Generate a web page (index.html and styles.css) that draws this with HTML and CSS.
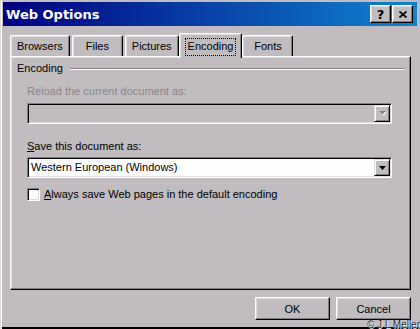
FILE: index.html
```html
<!DOCTYPE html>
<html lang="en">

<head>
    <meta charset="UTF-8">
    <meta name="viewport" content="width=device-width, initial-scale=1.0">
    <title>Web Options</title>
    <link rel="stylesheet" href="styles.css">
</head>

<body>
    <div class="window">
        <div class="titlebar">
            <span class="title">Web Options</span>
            <div class="title-buttons">
                <button class="title-btn">?</button>
                <button class="title-btn">
                    <svg width="8" height="7" viewBox="0 0 8 7">
                        <path d="M0.5 0.5 L7.5 6.5 M7.5 0.5 L0.5 6.5" stroke="#000" stroke-width="1.8" fill="none" />
                    </svg>
                </button>
            </div>
        </div>

        <div class="tabs">
            <div class="tab">Browsers</div>
            <div class="tab">Files</div>
            <div class="tab">Pictures</div>
            <div class="tab active"><span class="focus-ring">Encoding</span></div>
            <div class="tab">Fonts</div>
        </div>

        <div class="panel">
            <div class="group-head">
                <span>Encoding</span>
                <div class="groove"></div>
            </div>
            <div class="group-body">
                <div class="label disabled">Reload the current document as:</div>
                <div class="combo combo-disabled">
                    <span class="combo-text"></span>
                    <span class="combo-btn">
                        <svg width="7" height="5" viewBox="0 0 7 5">
                            <path d="M1 1 H8 L4.5 4.5 Z" fill="#fff" />
                            <path d="M0 0 H7 L3.5 3.5 Z" fill="#808080" />
                        </svg>
                    </span>
                </div>

                <div class="label save-label"><u>S</u>ave this document as:</div>
                <div class="combo">
                    <span class="combo-text">Western European (Windows)</span>
                    <span class="combo-btn">
                        <svg width="7" height="4" viewBox="0 0 7 4">
                            <path d="M0 0 H7 L3.5 4 Z" fill="#000" />
                        </svg>
                    </span>
                </div>

                <div class="check-row">
                    <span class="checkbox"></span>
                    <span><u>A</u>lways save Web pages in the default encoding</span>
                </div>
            </div>
        </div>

        <div class="footer">
            <button class="btn">OK</button>
            <button class="btn">Cancel</button>
        </div>

        <div class="credit">© J L Meller</div>
    </div>
</body>

</html>
```

FILE: styles.css
```css
body {
    margin: 0;
    background: #c0bcc0;
    font-family: "Liberation Sans", Arial, sans-serif;
    font-size: 11px;
    line-height: 13px;
    color: #000;
}

.window {
    position: relative;
    width: 420px;
    height: 329px;
    overflow: hidden;
    box-sizing: border-box;
    background: #c0bcc0;
    box-shadow: inset 1px 0 #dfdcdf, inset 2px 0 #fff, inset 0 -2px #000;
    padding-top: 2px;
}

/* title bar */

.titlebar {
    display: flex;
    align-items: center;
    justify-content: space-between;
    height: 24px;
    margin: 0 3px;
    padding: 0 3px;
    background: linear-gradient(to right, #000080, #1084d0);
}

.title {
    color: #fff;
    font-family: "DejaVu Sans", Verdana, sans-serif;
    font-weight: 700;
    font-size: 13px;
}

.title-buttons {
    display: flex;
    gap: 1px;
    margin-right: 1px;
}

.title-btn {
    display: flex;
    align-items: center;
    justify-content: center;
    width: 21px;
    height: 18px;
    padding: 0;
    background: #c0bcc0;
    border: 1px solid;
    border-color: #fff #000 #000 #fff;
    box-shadow: inset -1px -1px #808080, inset 1px 1px #dfdcdf;
    font-family: "DejaVu Sans", Verdana, sans-serif;
    font-weight: 700;
    font-size: 13px;
    color: #000;
}

/* tabs */

.tabs {
    display: flex;
    align-items: flex-end;
    gap: 2px;
    height: 23px;
    margin: 7px 0 0 10px;
    position: relative;
    z-index: 1;
}

.tab {
    box-sizing: border-box;
    min-width: 51px;
    height: 21px;
    padding: 4px 6px 0;
    text-align: center;
    white-space: nowrap;
    border: 1px solid;
    border-bottom: none;
    border-color: #fff #000 #000 #fff;
    border-radius: 2px 2px 0 0;
    box-shadow: inset -1px 0 #808080, inset 1px 1px #dfdcdf;
}

.tab.active {
    height: 25px;
    margin: 0 -2px -2px;
    padding: 4px 5px 0;
    background: #c0bcc0;
}

.focus-ring {
    display: inline-block;
    padding: 1px 2px 2px;
    border: 1px dotted #000;
}

/* panel */

.panel {
    box-sizing: border-box;
    height: 234px;
    margin: 0 9px 0 10px;
    padding: 5px 5px 0 6px;
    border: 1px solid;
    border-color: #fff #000 #000 #fff;
    box-shadow: inset -1px -1px #808080, inset 1px 1px #dfdcdf;
}

.group-head {
    display: flex;
    align-items: center;
    gap: 7px;
}

.groove {
    flex: 1;
    border-top: 1px solid #808080;
    border-bottom: 1px solid #fff;
}

.group-body {
    padding: 0 13px 0 10px;
}

.label {
    margin-top: 10px;
}

.label.disabled {
    color: #8a868a;
}

.save-label {
    margin-top: 16px;
}

.combo {
    display: flex;
    align-items: center;
    justify-content: space-between;
    box-sizing: border-box;
    height: 21px;
    margin-top: 5px;
    padding: 0 1px 0 2px;
    background: #fff;
    border: 1px solid;
    border-color: #808080 #fff #fff #808080;
    box-shadow: inset 1px 1px #000, inset -1px -1px #dfdcdf;
}

.save-label + .combo {
    margin-top: 4px;
}

.combo-disabled {
    background: #c0bcc0;
}

.combo-text {
    padding-left: 1px;
    white-space: nowrap;
}

.combo-btn {
    display: flex;
    align-items: center;
    justify-content: center;
    box-sizing: border-box;
    width: 16px;
    height: 17px;
    background: #c0bcc0;
    border: 1px solid;
    border-color: #dfdcdf #000 #000 #dfdcdf;
    box-shadow: inset 1px 1px #fff, inset -1px -1px #808080;
}

.check-row {
    display: flex;
    align-items: center;
    gap: 4px;
    margin-top: 10px;
}

.checkbox {
    box-sizing: border-box;
    width: 13px;
    height: 13px;
    background: #fff;
    border: 1px solid;
    border-color: #808080 #fff #fff #808080;
    box-shadow: inset 1px 1px #000, inset -1px -1px #dfdcdf;
}

/* buttons */

.footer {
    display: flex;
    justify-content: flex-end;
    gap: 6px;
    margin-top: 7px;
    padding-right: 9px;
}

.btn {
    width: 75px;
    height: 23px;
    padding: 0;
    background: #c0bcc0;
    border: 1px solid;
    border-color: #fff #000 #000 #fff;
    box-shadow: inset -1px -1px #808080, inset 1px 1px #dfdcdf;
    font-family: inherit;
    font-size: 11px;
    color: #000;
}

.credit {
    position: absolute;
    right: 0;
    bottom: -1px;
    font-size: 10px;
    line-height: 11px;
    color: #222;
    text-shadow: 0 0 1px #fff, 1px 1px 0 #eee;
}
```
